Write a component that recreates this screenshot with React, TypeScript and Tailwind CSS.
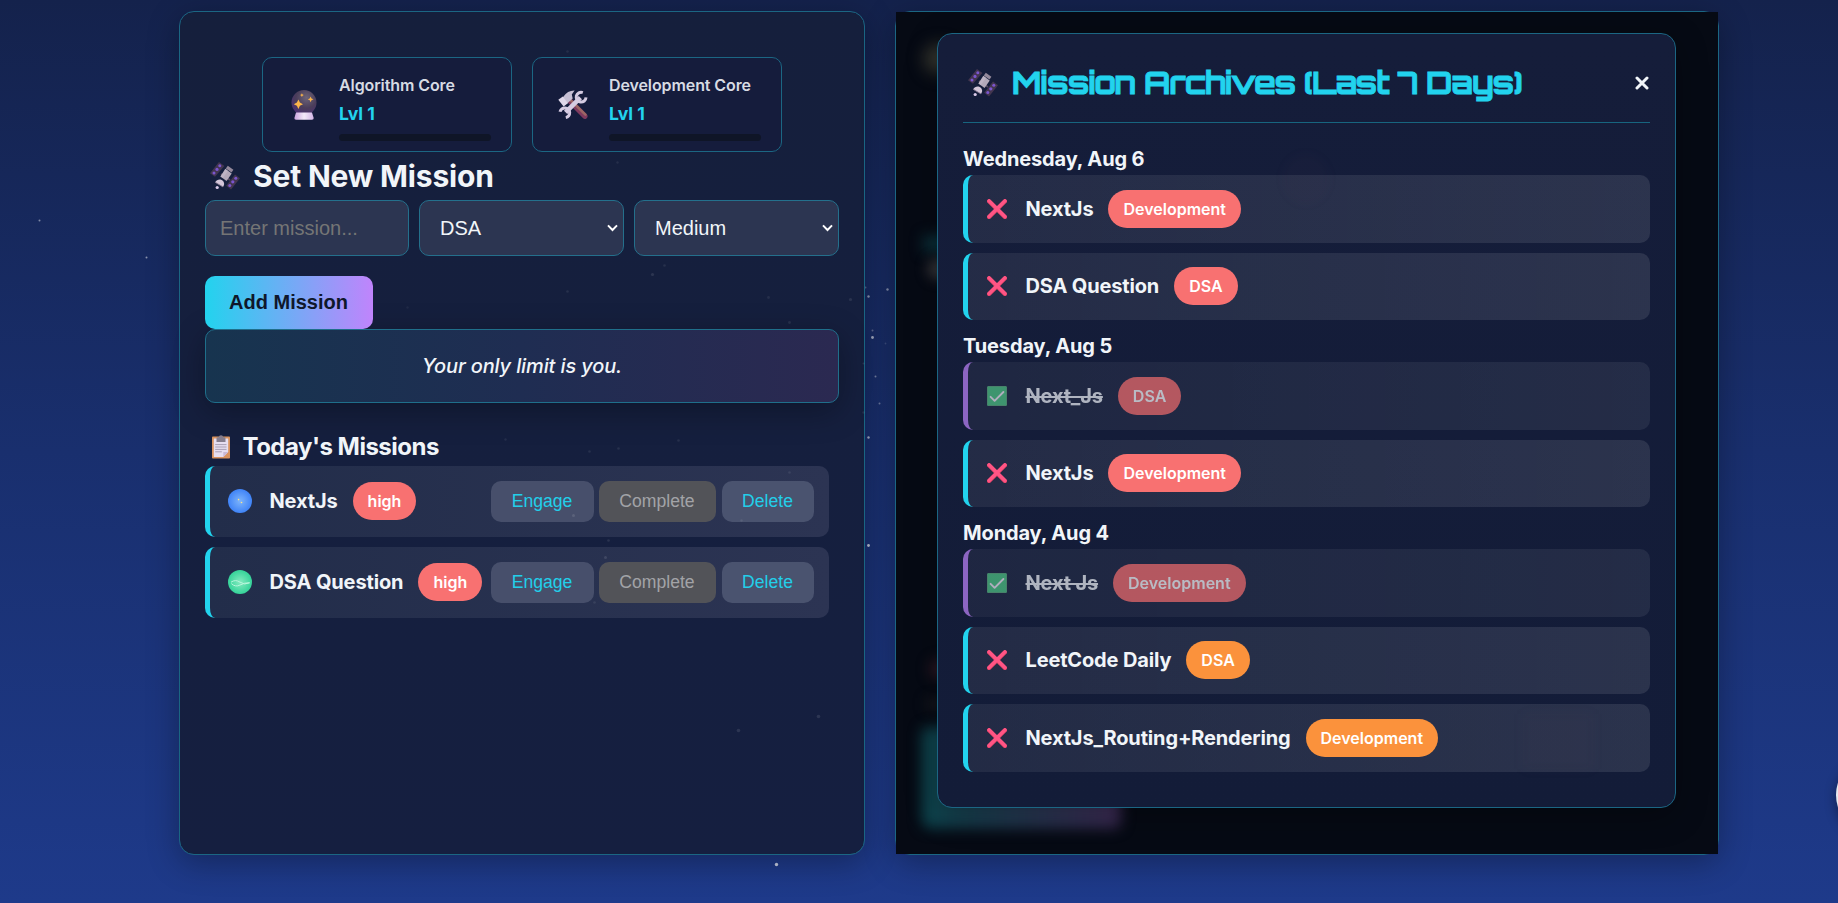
import type { ReactNode } from "react";

const INTER = "font-['Inter',sans-serif]";
const ARIAL = "font-['Liberation_Sans',Arial,sans-serif]";

type Star = [x: number, y: number, r: number, opacity: number];

const brightStars: Star[] = [
  [39, 220, 1, 0.45], [146, 257, 1, 0.5], [865, 287, 1, 0.25], [868, 296, 1.2, 0.5],
  [887, 289, 1.2, 0.45], [872, 330, 1, 0.3], [872, 337, 1.4, 0.6], [885, 343, 0.9, 0.15],
  [875, 376, 1, 0.4], [879, 403, 1, 0.35], [868, 437, 1.2, 0.6], [868, 545, 1.4, 0.7],
  [776, 864, 1.7, 0.75],
];

const dimStars: Star[] = [
  [567, 51, 1.3, 0.07], [617, 162, 1.2, 0.07], [567, 291, 1.3, 0.08], [407, 307, 1.2, 0.05],
  [664, 265, 1.3, 0.08], [652, 274, 1.6, 0.1], [768, 297, 1.4, 0.07], [850, 299, 1.6, 0.09],
  [789, 322, 1.4, 0.08], [863, 363, 1, 0.1], [678, 440, 1.3, 0.08], [618, 448, 1.3, 0.08],
  [505, 439, 1.2, 0.07], [589, 451, 1.3, 0.08], [789, 472, 1.3, 0.08], [573, 515, 1.5, 0.11],
  [608, 540, 1.3, 0.09], [605, 557, 1.5, 0.11], [594, 602, 1.3, 0.08], [741, 520, 1.2, 0.08],
  [818, 716, 1.8, 0.1], [738, 730, 1.8, 0.1], [863, 412, 1.2, 0.08],
];

function StarField({ stars }: { stars: Star[] }) {
  return (
    <svg className="pointer-events-none absolute inset-0" width="1838" height="903">
      {stars.map(([x, y, r, o]) => (
        <circle key={`${x}-${y}`} cx={x + 0.5} cy={y + 0.5} r={r} fill="#fff" opacity={o} />
      ))}
    </svg>
  );
}

function Satellite() {
  return (
    <svg width="30" height="28" viewBox="0 0 30 28" className="shrink-0">
      <path d="M9 0 L14.4 4 L5 14.8 L0 11.2 Z" fill="#43364f" />
      <path d="M25 12.6 L30 16.2 L21 27.4 L16.2 23.8 Z" fill="#43364f" />
      <g fill="#7a55cf">
        <circle cx="9.8" cy="3.8" r="1.5" /><circle cx="7" cy="7.4" r="1.6" /><circle cx="4" cy="11" r="1.5" />
        <circle cx="25.8" cy="16.2" r="1.5" /><circle cx="22.8" cy="19.8" r="1.6" /><circle cx="19.8" cy="23.4" r="1.5" />
      </g>
      <path d="M11 12 L20 18" stroke="#574b60" strokeWidth="1.6" />
      <path d="M15.3 6.8 L21.7 11.4 L16.6 19 L10.4 14.4 Z" fill="#b3a9b9" />
      <path d="M17.8 3.8 L23.4 7.8 L21.5 10.6 L15.8 6.5 Z" fill="#94899b" />
      <path d="M15.6 7 L18 8.7 L12.8 16.2 L10.4 14.4 Z" fill="#cfc5d4" opacity="0.4" />
      <path d="M5.2 20.3 C7 16.6 11.3 16.6 13.3 19.3 C14.6 21.2 14.3 23.4 13 24.9 Z" fill="#d3c6d9" />
      <path d="M5.2 20.3 L13 24.9" stroke="#85778e" strokeWidth="0.9" />
      <circle cx="7.2" cy="25.5" r="1.6" fill="#d9c9e8" />
    </svg>
  );
}

function CrystalBall() {
  return (
    <svg width="26" height="30" viewBox="0 0 26 30">
      <defs>
        <radialGradient id="ball" cx="0.6" cy="0.3" r="0.7">
          <stop offset="0" stopColor="#6d6478" />
          <stop offset="0.6" stopColor="#4a3d5a" />
          <stop offset="1" stopColor="#4b3070" />
        </radialGradient>
        <linearGradient id="base" x1="0" x2="1">
          <stop offset="0" stopColor="#c9a3dd" />
          <stop offset="0.5" stopColor="#f3e9f8" />
          <stop offset="1" stopColor="#d3b4e6" />
        </linearGradient>
      </defs>
      <circle cx="13" cy="12.6" r="12.5" fill="url(#ball)" />
      <path d="M5 22.5 H21 L22.7 28 Q22.8 29.8 21 29.8 H5 Q3.2 29.8 3.4 28 Z" fill="url(#base)" />
      <g fill="#fbb54a">
        <path d="M7.4 9.4 L8.9 12.6 L12 14.2 L8.9 15.8 L7.4 19 L5.9 15.8 L2.8 14.2 L5.9 12.6 Z" />
        <path d="M19.6 6.4 L20.5 8.4 L22.5 9.3 L20.5 10.2 L19.6 12.2 L18.7 10.2 L16.7 9.3 L18.7 8.4 Z" />
        <path d="M10.9 3.2 L11.5 4.5 L12.8 5.1 L11.5 5.7 L10.9 7 L10.3 5.7 L9 5.1 L10.3 4.5 Z" />
      </g>
    </svg>
  );
}

function Tools() {
  return (
    <svg width="30" height="30" viewBox="0 0 30 30" className="-ml-[3px]">
      <path d="M12.5 11.5 L26.8 26.2" stroke="#7f3a5f" strokeWidth="5.4" strokeLinecap="round" />
      <path d="M13 10.6 L27.4 24.6" stroke="#9c6664" strokeWidth="2.6" strokeLinecap="round" />
      <path d="M5.5 6.6 Q9.5 0.4 16.6 0.6 L13.8 4.4 L14.7 8.6 L8.6 14 L4.2 8.6 Z" fill="#c6bfd4" />
      <path d="M0.3 9.8 L4.8 6.4 L9.8 13.2 L5.6 16.4 Z" fill="#e0d8ea" />
      <path d="M7.6 22.4 L22.4 7.6" stroke="#d5cbe2" strokeWidth="4.6" />
      <path d="M24.8 2.6 A4.9 4.9 0 1 0 28 7.4" fill="none" stroke="#d5cbe2" strokeWidth="3" />
      <path d="M2 21.8 A4.9 4.9 0 1 1 7.8 27.6" fill="none" stroke="#d5cbe2" strokeWidth="3" />
    </svg>
  );
}

function Clipboard() {
  return (
    <svg width="18" height="24" viewBox="0 0 18 24">
      <rect x="0" y="1.5" width="18" height="22" rx="0.8" fill="#d9935f" />
      <path d="M1.8 3.4 H16.2 V17 L11.3 22 H1.8 Z" fill="#e6def0" />
      <path d="M16.2 17 H11.3 V22 Z" fill="#c9b9d6" />
      <path d="M4.5 3.2 Q4.5 2.2 5.5 2.2 H6.8 Q7 0.2 9 0.2 Q11 0.2 11.2 2.2 H12.5 Q13.5 2.2 13.5 3.2 V7 H4.5 Z" fill="#857d8d" />
      <path d="M3.2 9.6 H14.5 M3.2 12 H14.5 M3.2 14.4 H14.5 M3.2 16.8 H9.8" stroke="#a99fb4" strokeWidth="1" />
    </svg>
  );
}

function BluePlanet() {
  return (
    <svg width="24" height="24" viewBox="0 0 24 24">
      <defs>
        <radialGradient id="blue">
          <stop offset="0" stopColor="#7db4fb" />
          <stop offset="1" stopColor="#3f83f7" />
        </radialGradient>
      </defs>
      <circle cx="12" cy="12" r="12" fill="url(#blue)" />
      <circle cx="10.6" cy="10.6" r="0.8" fill="#fde58a" />
      <circle cx="13.5" cy="13.5" r="0.8" fill="#fde58a" />
    </svg>
  );
}

function GreenPlanet() {
  return (
    <svg width="24" height="24" viewBox="0 0 24 24">
      <defs>
        <radialGradient id="green">
          <stop offset="0" stopColor="#84ebc0" />
          <stop offset="1" stopColor="#35d399" />
        </radialGradient>
      </defs>
      <circle cx="12" cy="12" r="12" fill="url(#green)" />
      <path d="M3 12.2 Q7.5 9 12 12.2 T21.6 12.8" fill="none" stroke="#b9f6dc" strokeWidth="1" />
      <path d="M3.4 13.6 Q7.5 17.5 12 15 T21.6 12.8" fill="none" stroke="#b9f6dc" strokeWidth="1" />
    </svg>
  );
}

function Cross() {
  return (
    <svg width="20" height="20" viewBox="0 0 20 20" className="shrink-0">
      <path d="M2.1 2.3 L17.9 17.9 M17.9 2.3 L2.1 17.9" stroke="#e84468" strokeWidth="4.2" strokeLinecap="round" />
      <path d="M2.1 1.9 L17.9 17.5 M17.9 1.9 L2.1 17.5" stroke="#ff5585" strokeWidth="3.4" strokeLinecap="round" />
    </svg>
  );
}

function Check() {
  return (
    <svg width="20" height="20" viewBox="0 0 20 20" className="shrink-0">
      <rect width="20" height="20" rx="1.6" fill="#50c886" />
      <rect x="0.5" y="0.5" width="19" height="19" rx="1.4" fill="none" stroke="#5fae80" />
      <path d="M3.6 10.8 L7.6 14.8 L16.4 6" fill="none" stroke="#f3ecf8" strokeWidth="1.9" strokeLinecap="round" strokeLinejoin="round" />
    </svg>
  );
}

function StatCard({ icon, name }: { icon: ReactNode; name: string }) {
  return (
    <div className="flex h-[95px] w-[250px] rounded-[10px] border border-[#1b6683] bg-[#151c3c] pl-[28px]">
      <div className="flex w-[48px] items-start pt-[32px]">{icon}</div>
      <div className="flex w-[152px] flex-col pt-[15px]">
        <span className="h-6 text-[16px] font-semibold leading-6 tracking-[-0.1px] text-[#d7dbe3]">{name}</span>
        <span className="mt-[3px] h-7 text-[17.6px] font-bold leading-7 text-[#22d3ee]">Lvl 1</span>
        <div className="mt-[6px] h-[7px] rounded-full bg-[#0f1527]" />
      </div>
    </div>
  );
}

function SelectBox({ value }: { value: string }) {
  return (
    <div className="flex h-14 items-center justify-between rounded-[10px] border border-[#24708c] bg-[#2c3551] pl-5 pr-[5px] text-[20px] text-[#f1f5f9]">
      <span>{value}</span>
      <svg width="11" height="8" viewBox="0 0 11 8">
        <path d="M1 1.4 L5.5 6 L10 1.4" fill="none" stroke="#fff" strokeWidth="2" />
      </svg>
    </div>
  );
}

function Pill({ children, tone }: { children: ReactNode; tone: "red" | "orange" }) {
  return (
    <span
      className={`flex h-[38px] items-center rounded-[20px] px-[15px] text-[16px] font-semibold text-white ${
        tone === "red" ? "bg-[#f87171]" : "bg-[#fb923c]"
      }`}
    >
      {children}
    </span>
  );
}

function MissionRow({ icon, name }: { icon: ReactNode; name: string }) {
  return (
    <div className="flex h-[71px] w-[624px] items-center justify-between rounded-[10px] border-l-[5px] border-[#22d3ee] bg-linear-to-r from-[#222d4a] to-[#2c3453] pl-[18px] pr-[15px]">
      <div className="flex items-center pb-px">
        {icon}
        <span className="ml-[17.5px] mr-[15px] text-[20px] font-bold tracking-[-0.13px] text-[#f1f5f9]">{name}</span>
        <Pill tone="red">high</Pill>
      </div>
      <div className={`flex items-center gap-[5px] text-[17.6px] ${ARIAL}`}>
        <button className="h-[41px] w-[103px] rounded-[10px] bg-[#474f6b] pr-px text-[#22cfea]">Engage</button>
        <button className="h-[41px] w-[117px] rounded-[10px] bg-[#525358] pr-px text-[#a2a3a7]">Complete</button>
        <button className="ml-px h-[41px] w-[92px] rounded-[10px] bg-[#4a536f] pr-px text-[#22cfea]">Delete</button>
      </div>
    </div>
  );
}

interface ArchiveItem {
  name: string;
  tag: string;
  tone: "red" | "orange";
  done?: boolean;
}

const archives: { day: string; items: ArchiveItem[] }[] = [
  {
    day: "Wednesday, Aug 6",
    items: [
      { name: "NextJs", tag: "Development", tone: "red" },
      { name: "DSA Question", tag: "DSA", tone: "red" },
    ],
  },
  {
    day: "Tuesday, Aug 5",
    items: [
      { name: "Next_Js", tag: "DSA", tone: "red", done: true },
      { name: "NextJs", tag: "Development", tone: "red" },
    ],
  },
  {
    day: "Monday, Aug 4",
    items: [
      { name: "Next Js", tag: "Development", tone: "red", done: true },
      { name: "LeetCode Daily", tag: "DSA", tone: "orange" },
      { name: "NextJs_Routing+Rendering", tag: "Development", tone: "orange" },
    ],
  },
];

function ArchiveRow({ item }: { item: ArchiveItem }) {
  return (
    <div
      className={`flex h-[67.5px] items-center rounded-[10px] border-l-[5px] bg-linear-to-r from-[#fcfeff11] to-[#fcfeff1a] pl-[19px] ${
        item.done ? "border-[#c084fc] opacity-70" : "border-[#22d3ee]"
      }`}
    >
      {item.done ? <Check /> : <Cross />}
      <span className={`ml-[18.5px] mr-[15px] text-[20px] font-bold tracking-[-0.15px] text-[#f1f5f9] ${item.done ? "line-through" : ""}`}>
        {item.name}
      </span>
      <Pill tone={item.tone}>{item.tag}</Pill>
    </div>
  );
}

export default function App() {
  return (
    <div
      className={`relative flex h-[903px] w-[1838px] gap-[30px] overflow-hidden bg-linear-to-b/srgb from-[#14224c] via-[#192f6e] to-[#1e3a8a] pl-[179px] pt-[11px] ${INTER}`}
    >
      <StarField stars={brightStars} />

      <section className="relative flex h-[844px] w-[686px] flex-col rounded-[15px] border border-[#1b6683] bg-linear-to-b from-[#151f3c] to-[#151f40] px-[25px] pt-[45px] shadow-[0_8px_32px_rgba(0,0,0,0.3)]">
        <div className="flex justify-center gap-5">
          <StatCard icon={<CrystalBall />} name="Algorithm Core" />
          <StatCard icon={<Tools />} name="Development Core" />
        </div>

        <h2 className="flex h-12 items-center pl-[5px] text-[30px] font-bold tracking-[-0.18px] text-[#f1f5f9]">
          <Satellite />
          <span className="ml-[13px]">Set New Mission</span>
        </h2>

        <div className={`grid grid-cols-[204px_205px_205px] gap-[10px] ${ARIAL}`}>
          <div className="flex h-14 items-center rounded-[10px] border border-[#24708c] bg-[#2c3551] pl-[14px] text-[20px] text-[#757575]">
            Enter mission...
          </div>
          <SelectBox value="DSA" />
          <SelectBox value="Medium" />
        </div>
        <button className={`relative z-10 mt-5 h-[53px] w-[168px] rounded-[10px] bg-linear-to-r/srgb from-[#22d3ee] to-[#c084fc] pb-[2px] pr-px text-[20px] font-bold text-[#0f172a] ${ARIAL}`}>
          Add Mission
        </button>

        <div className="flex h-[74px] items-center justify-center rounded-[10px] border border-[#1f6f8b] bg-linear-to-r/srgb from-[#17344f] via-[#1f2d52] to-[#2b2951] text-[20px] font-medium italic tracking-[-0.13px] text-[#f1f5f9] shadow-[0_8px_32px_rgba(0,0,0,0.3)]">
          Your only limit is you.
        </div>

        <h3 className="mt-[25px] flex h-[38px] items-center pl-[7px] text-[24px] font-bold tracking-[-0.5px] text-[#f1f5f9]">
          <Clipboard />
          <span className="ml-[12.5px]">Today's Missions</span>
        </h3>
        <div className="flex flex-col gap-[10px]">
          <MissionRow icon={<BluePlanet />} name="NextJs" />
          <MissionRow icon={<GreenPlanet />} name="DSA Question" />
        </div>
      </section>

      <section className="relative h-[844px] w-[824px] rounded-[15px] border border-[#1b6683] bg-[#151f3c] shadow-[0_8px_32px_rgba(0,0,0,0.3)]">
        <div className="absolute inset-0 overflow-hidden bg-[#060a14] pl-[41px] pt-[21px]">
          <div className="absolute left-[28px] top-[32px] h-[30px] w-[30px] rounded-full bg-[#35362e] blur-[8px]" />
          <div className="absolute left-[28px] top-[224px] h-[16px] w-[60px] bg-[#0b343d] blur-[7px]" />
          <div className="absolute left-[31px] top-[246px] h-[22px] w-[26px] rounded-full bg-[#313135] blur-[6px]" />
          <div className="absolute left-[34px] top-[648px] h-[18px] w-[26px] rounded-full bg-[#331a26] blur-[7px]" />
          <div className="absolute left-[30px] top-[686px] h-[12px] w-[60px] bg-[#14161c] blur-[6px]" />
          <div className="absolute left-[26px] top-[715px] h-[101px] w-[199px] rounded-[8px] bg-linear-to-r/srgb from-[#0c464e] to-[#3c2a54] blur-[7px]" />

          <div className="relative h-[775px] w-[739px] rounded-[15px] border border-[#1b6683] bg-linear-to-b from-[#151d3a] to-[#131c38] px-[25px] shadow-[0_8px_32px_rgba(0,0,0,0.3)]">
            <header className="flex h-[89px] items-center border-b border-[#17657f] pl-[5px] pt-[10px]">
              <Satellite />
              <h2 className="ml-[14px] whitespace-nowrap font-['Orbitron','DejaVu_Sans',sans-serif] text-[31.5px] font-bold tracking-[-1px] text-[#22d3ee] [-webkit-text-stroke:0.8px_#22d3ee]">
                Mission Archives (Last 7 Days)
              </h2>
              <svg width="14" height="14" viewBox="0 0 14 14" className="ml-auto mr-[1px]">
                <path d="M2 2 L12 12 M12 2 L2 12" stroke="#f1f5f9" strokeWidth="3" strokeLinecap="round" />
              </svg>
            </header>
            <div className="flex flex-col gap-[9px] pt-[19px]">
              {archives.map((group) => (
                <div key={group.day}>
                  <h4 className="h-[33px] pt-px text-[20px] font-bold leading-[33px] tracking-[-0.13px] text-[#f1f5f9]">{group.day}</h4>
                  <div className="flex flex-col gap-[10px]">
                    {group.items.map((item) => (
                      <ArchiveRow key={item.name} item={item} />
                    ))}
                  </div>
                </div>
              ))}
            </div>
            <div className="pointer-events-none absolute left-[345px] top-[120px] h-[50px] w-[46px] rounded-full bg-[#78406008] blur-[5px]" />
            <div className="pointer-events-none absolute left-[585px] top-[680px] h-[55px] w-[70px] bg-[#7840600a] blur-[6px]" />
          </div>
        </div>
      </section>

      <StarField stars={dimStars} />
      <div className="absolute left-[1836px] top-[755px] size-20 rounded-full bg-[#e8eaf0] shadow-[0_4px_12px_rgba(0,0,0,0.4)]" />
    </div>
  );
}
